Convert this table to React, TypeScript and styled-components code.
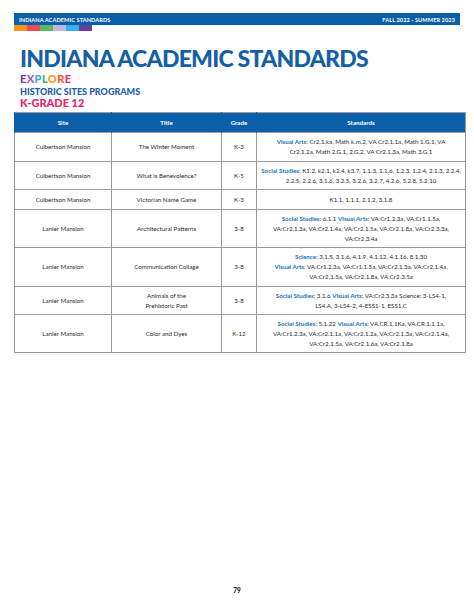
import React from 'react';
import styled, { createGlobalStyle } from 'styled-components';

const Global = createGlobalStyle`
  html, body { margin: 0; padding: 0; background: #ffffff; }
  body { font-family: Lato, "Open Sans", sans-serif; }
`;

const Page = styled.div`
  width: 474px;
  height: 613px;
  box-sizing: border-box;
  padding: 13px 14px 0 14px;
  display: flex;
  flex-direction: column;
`;

const TopBar = styled.header`
  height: 12px;
  background: #0b5fa8;
  color: #ffffff;
  display: flex;
  align-items: center;
  justify-content: space-between;
  padding: 0 5px;
  font-size: 5.6px;
  font-weight: 700;
  letter-spacing: 0.1px;
`;

const Strips = styled.div`
  display: flex;
  height: 6px;
`;

const Strip = styled.span<{ $c: string }>`
  width: 13px;
  background: ${p => p.$c};
`;

const Heading = styled.div`
  padding-left: 6px;
  margin-top: 13px;
  display: flex;
  flex-direction: column;
`;

const Title = styled.h1`
  margin: 0;
  font-size: 23px;
  line-height: 28px;
  font-weight: 900;
  color: #155fa6;
  letter-spacing: -0.75px;
`;

const Explore = styled.div`
  font-size: 11px;
  line-height: 13px;
  font-weight: 900;
  letter-spacing: 0.4px;
`;

const Letter = styled.span<{ $c: string }>`
  color: ${p => p.$c};
`;

const Sub = styled.div`
  margin-top: 2px;
  font-size: 9px;
  line-height: 10px;
  font-weight: 900;
  color: #1c5ea6;
`;

const Grade = styled.div`
  font-size: 11px;
  line-height: 12px;
  font-weight: 900;
  color: #e4256f;
`;

const Table = styled.table`
  margin-top: 3px;
  width: 447px;
  border-collapse: collapse;
  table-layout: fixed;
  font-size: 6.2px;
  line-height: 10px;
  color: #2a2a2a;
  border: 1px solid #9a9a9a;
`;

const Th = styled.th<{ $w: number }>`
  width: ${p => p.$w}px;
  background: #0b5fa8;
  color: #ffffff;
  font-weight: 700;
  height: 19px;
  padding: 0;
  border-left: 1px solid #0b5fa8;
  text-align: center;
`;

const Tr = styled.tr<{ $min?: number }>`
  height: ${p => (p.$min ? `${p.$min}px` : 'auto')};
`;

const Td = styled.td`
  border: 1px solid #9a9a9a;
  text-align: center;
  vertical-align: middle;
  padding: 3.5px 2px;
  white-space: nowrap;
`;

const Label = styled.b`
  font-weight: 700;
  color: #1b74b8;
`;

const Footer = styled.div`
  margin-top: auto;
  padding-bottom: 19px;
  text-align: center;
  font-size: 6.5px;
  font-weight: 900;
  color: #222;
`;

const strips = ['#f7941d', '#ef4a57', '#5cb85c', '#c3b6df', '#36b1e3', '#6c3a98'];

const explore: [string, string][] = [
  ['E', '#7b3f99'],
  ['X', '#9b5cb8'],
  ['P', '#3ba8df'],
  ['L', '#4db35b'],
  ['O', '#f59a1c'],
  ['R', '#ee5a3a'],
  ['E', '#e6306d'],
];

type Row = { site: string; title: React.ReactNode; grade: string; std: React.ReactNode; min?: number };

const rows: Row[] = [
  {
    site: 'Culbertson Mansion',
    title: 'The Winter Moment',
    grade: 'K-3',
    min: 29,
    std: (
      <>
        <Label>Visual Arts:</Label> Cr2.1.ka, Math k.m.2, VA Cr2.1.1a, Math 1.G.1, VA
        <br />
        Cr2.1.2a, Math 2.G.1, 2.G.2, VA Cr2.1.3a, Math 3.G.1
      </>
    ),
  },
  {
    site: 'Culbertson Mansion',
    title: 'What is Benevolence?',
    grade: 'K-5',
    std: (
      <>
        <Label>Social Studies:</Label> K1.2, k2.1, k2.4, k3.7, 1.1.3, 1.1.6, 1.2.3, 1.2.4, 2.1.3, 2.2.4,
        <br />
        2.2.5, 2.2.6, 3.1.6, 3.2.5, 3.2.6, 3.2.7, 4.2.6, 5.2.8, 5.2.10
      </>
    ),
  },
  {
    site: 'Culbertson Mansion',
    title: 'Victorian Name Game',
    grade: 'K-3',
    min: 20,
    std: <>K1.1, 1.1.1, 2.1.2, 3.1.8</>,
  },
  {
    site: 'Lanier Mansion',
    title: 'Architectural Patterns',
    grade: '3-8',
    std: (
      <>
        <Label>Social Studies:</Label> 6.1.1 <Label>Visual Arts:</Label> VA:Cr1.2.3a, VA:Cr1.1.5a,
        <br />
        VA:Cr2.1.3a, VA:Cr2.1.4a, VA:Cr2.1.5a, VA:Cr2.1.8a, VA:Cr2.3.3a,
        <br />
        VA:Cr2.3.4a
      </>
    ),
  },
  {
    site: 'Lanier Mansion',
    title: 'Communication Collage',
    grade: '3-8',
    min: 39,
    std: (
      <>
        <Label>Science:</Label> 3.1.5, 3.1.6, 4.1.9, 4.1.12, 4.1.16, 8.1.30
        <br />
        <Label>Visual Arts:</Label> VA:Cr1.2.3a, VA:Cr1.1.5a, VA:Cr2.1.3a, VA:Cr2.1.4a,
        <br />
        VA:Cr2.1.5a, VA:Cr2.1.8a, VA:Cr2.3.5a
      </>
    ),
  },
  {
    site: 'Lanier Mansion',
    title: (
      <>
        Animals of the
        <br />
        Prehistoric Past
      </>
    ),
    grade: '3-8',
    std: (
      <>
        <Label>Social Studies:</Label> 3.1.6 <Label>Visual Arts:</Label> VA:Cr2.3.3a Science: 3-LS4-1,
        <br />
        LS4.A, 3-LS4-2, 4-ESS1-1, ESS1.C
      </>
    ),
  },
  {
    site: 'Lanier Mansion',
    title: 'Color and Dyes',
    grade: 'K-12',
    std: (
      <>
        <Label>Social Studies:</Label> 5.1.22 <Label>Visual Arts:</Label> VA.CR.1.1Ka, VA.CR.1.1.1a,
        <br />
        VA:Cr1.2.3a, VA:Cr2.1.1a, VA:Cr2.1.2a, VA:Cr2.1.3a, VA:Cr2.1.4a,
        <br />
        VA:Cr2.1.5a, VA:Cr2.1.6a, VA:Cr2.1.8a
      </>
    ),
  },
];

export default function App() {
  return (
    <Page>
      <Global />
      <TopBar>
        <span>INDIANA ACADEMIC STANDARDS</span>
        <span>FALL 2022 - SUMMER 2023</span>
      </TopBar>
      <Strips>
        {strips.map(c => (
          <Strip key={c} $c={c} />
        ))}
      </Strips>
      <Heading>
        <Title>INDIANA ACADEMIC STANDARDS</Title>
        <Explore>
          {explore.map(([l, c], i) => (
            <Letter key={i} $c={c}>
              {l}
            </Letter>
          ))}
        </Explore>
        <Sub>HISTORIC SITES PROGRAMS</Sub>
        <Grade>K-GRADE 12</Grade>
      </Heading>
      <Table>
        <thead>
          <tr>
            <Th $w={96}>Site</Th>
            <Th $w={109}>Title</Th>
            <Th $w={34}>Grade</Th>
            <Th $w={208}>Standards</Th>
          </tr>
        </thead>
        <tbody>
          {rows.map((r, i) => (
            <Tr key={i} $min={r.min}>
              <Td>{r.site}</Td>
              <Td>{r.title}</Td>
              <Td>{r.grade}</Td>
              <Td>{r.std}</Td>
            </Tr>
          ))}
        </tbody>
      </Table>
      <Footer>79</Footer>
    </Page>
  );
}
